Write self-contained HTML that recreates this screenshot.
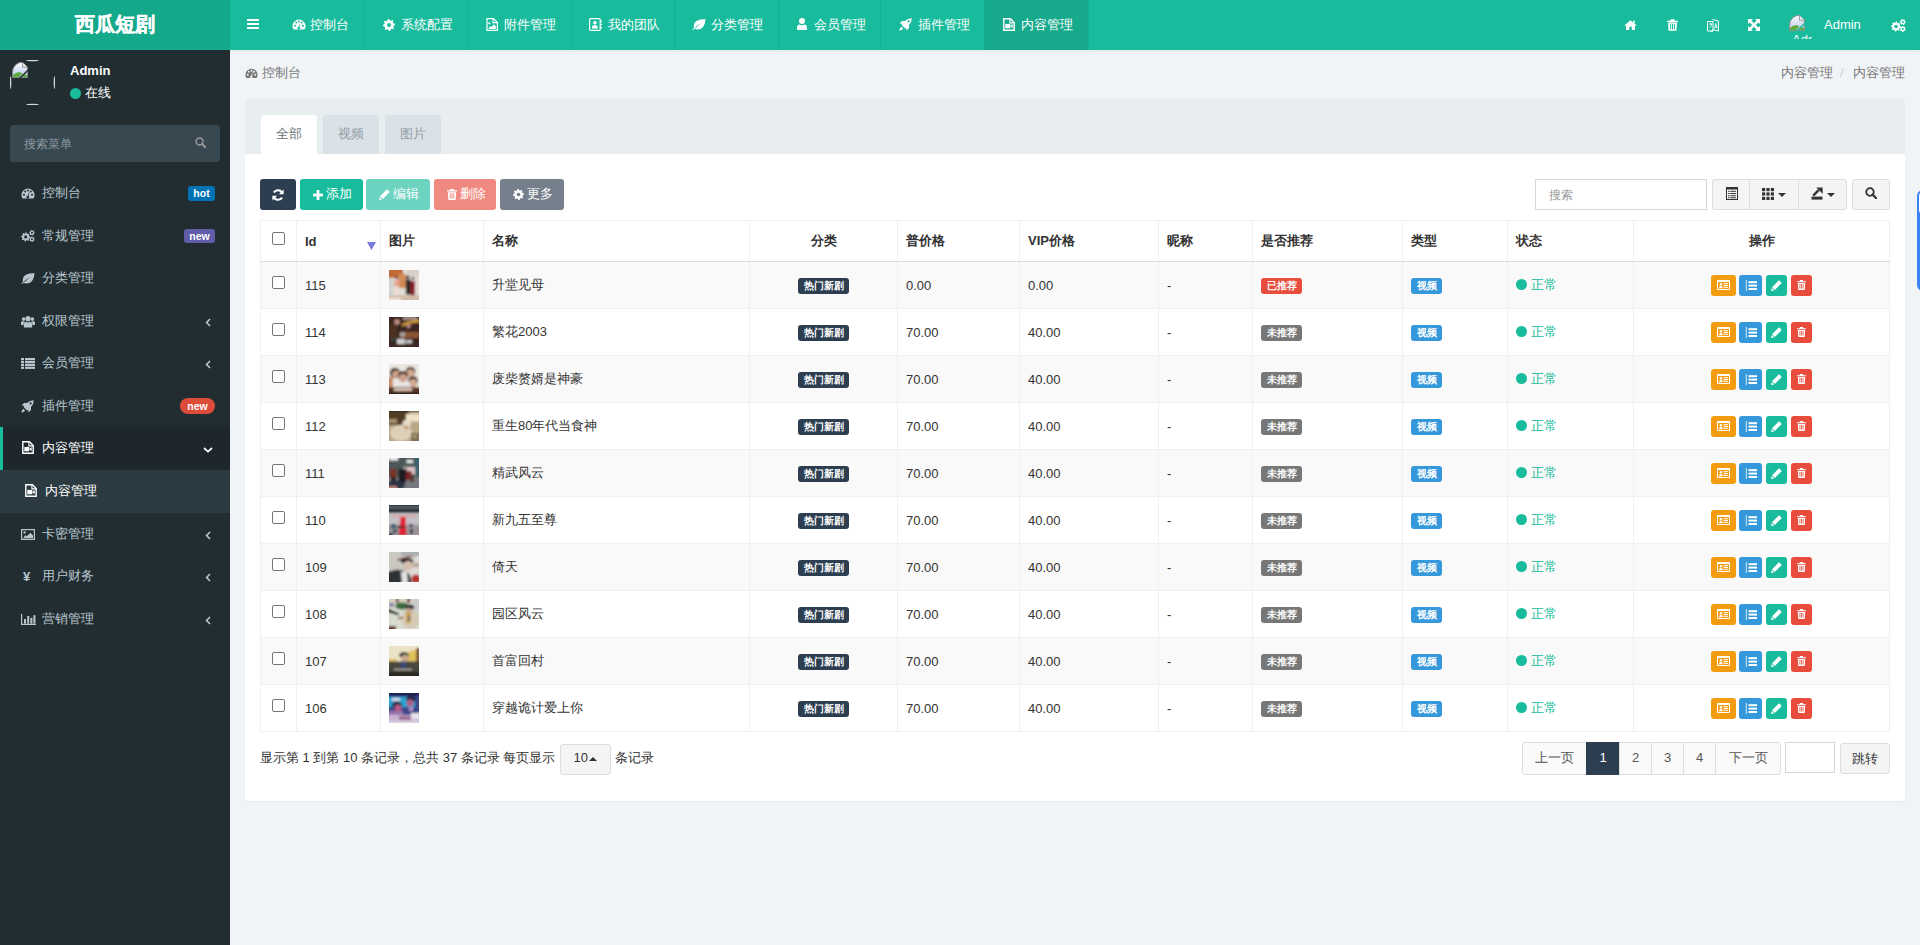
<!DOCTYPE html><html><head><meta charset="utf-8"><title>内容管理</title><style>
*{box-sizing:border-box;margin:0;padding:0}
html,body{width:1920px;height:945px;overflow:hidden}
body{font-family:"Liberation Sans",sans-serif;font-size:13px;color:#333;background:#f1f4f6;position:relative}
.abs{position:absolute}
.hdr{position:absolute;left:0;top:0;width:1920px;height:50px;background:#18bc9c;box-shadow:0 1px 3px rgba(0,0,0,.06);z-index:2}
.logo{z-index:3;position:absolute;left:0;top:0;width:230px;height:50px;background:#15a98b;color:#fff;font-size:20px;font-weight:bold;text-align:center;line-height:48px;-webkit-text-stroke:.35px #fff}
.nv{position:absolute;top:0;height:50px;border-right:1px solid #17ae90;z-index:3}
.nv.act{background:#16a98c}
.t{position:absolute;white-space:nowrap;line-height:20px;z-index:4}
.ic{position:absolute;z-index:4}
.side{position:absolute;left:0;top:50px;width:230px;height:895px;background:#222d32}
.mi{position:absolute;left:0;width:230px;height:43px;color:#b8c7ce}
.mi .t{left:42px;top:11px}
.badge{position:absolute;font-size:10.5px;font-weight:bold;color:#fff;line-height:15px;text-align:center;border-radius:3px}
.content{position:absolute;left:230px;top:50px;width:1690px;height:895px;background:#f1f4f6}
.panel{position:absolute;left:245px;top:99px;width:1660px;height:702px;background:#fff;border-radius:3px;box-shadow:0 1px 1px rgba(0,0,0,.05)}
.phead{position:absolute;left:245px;top:99px;width:1660px;height:55px;background:#e8edf0;border-radius:3px 3px 0 0}
.tab{position:absolute;top:115px;height:39px;width:56px;background:#dae1e7;border-radius:3px 3px 0 0;color:#949ea5;text-align:center;line-height:37px}
.tab.on{background:#fff;color:#6b7378}
.btn{position:absolute;top:179px;height:31px;border-radius:3px;color:#fff;white-space:nowrap}
.tbl{position:absolute;left:260px;top:220px;width:1630px;border-collapse:collapse;table-layout:fixed}
.tbl td,.tbl th{border:1px solid #f0f0f0;padding:0 8px;vertical-align:middle;white-space:nowrap;overflow:hidden}
.tbl th{height:41px;font-weight:bold;text-align:left;border-bottom:1px solid #dddddd;color:#333}
.tbl td{height:47px;color:#333}
.tbl tr.s td{background:#f9f9f9}
.lbl{position:relative;top:1px;display:inline-block;font-size:9.75px;font-weight:bold;color:#fff;border-radius:3px;height:16px;line-height:16px;text-align:center;vertical-align:middle}
.ab{display:inline-block;height:21px;border-radius:3px;vertical-align:middle;position:relative}
.ab svg{position:absolute}
.pg{position:absolute;top:742px;height:33px;border:1px solid #ddd;background:#fafafa;color:#555;text-align:center;line-height:29px;font-size:13px}
</style></head><body>
<svg width="0" height="0" style="position:absolute"><defs><filter id="bl" x="-10%" y="-10%" width="120%" height="120%"><feGaussianBlur stdDeviation="0.9"/></filter></defs></svg>
<div class="hdr"></div>
<div class="logo">西瓜短剧</div>
<div class="ic" style="left:247px;top:19px"><svg width="12" height="10" viewBox="0 0 12 10" style="display:block;"><rect x="0" y="0" width="12" height="2" fill="#fff"/><rect x="0" y="4" width="12" height="2" fill="#fff"/><rect x="0" y="8" width="12" height="2" fill="#fff"/></svg></div>
<div class="nv" style="left:274px;width:90px"></div>
<div class="ic" style="left:291.6px;top:19px"><svg width="14" height="11" viewBox="0 0 14 11" style="display:block;"><path d="M7 0.5A6.5 6.5 0 0 0 0.5 7v0.5q0 1.6 1.1 2.9h10.8q1.1-1.3 1.1-2.9V7A6.5 6.5 0 0 0 7 0.5z" fill="#fff"/><circle cx="3" cy="6.8" r="1" fill="#18bc9c"/><circle cx="4.2" cy="3.6" r="1" fill="#18bc9c"/><circle cx="7" cy="2.5" r="1" fill="#18bc9c"/><circle cx="11" cy="6.8" r="1" fill="#18bc9c"/><circle cx="9.8" cy="3.6" r="1" fill="#18bc9c"/><path d="M8.6 3.2 L7.6 8.2 A1.3 1.3 0 1 1 6.6 7.9z" fill="#18bc9c"/></svg></div>
<div class="t" style="left:310px;top:15px;color:#fff">控制台</div>
<div class="nv" style="left:365px;width:103px"></div>
<div class="ic" style="left:382.7px;top:19px"><svg width="12" height="12" viewBox="0 0 12 12" style="display:block;"><path d="M11.88 4.81 L12.00 5.98 L10.51 6.88 L10.26 7.74 L11.00 9.32 L10.26 10.23 L8.57 9.82 L7.78 10.24 L7.19 11.88 L6.02 12.00 L5.12 10.51 L4.26 10.26 L2.68 11.00 L1.77 10.26 L2.18 8.57 L1.76 7.78 L0.12 7.19 L0.00 6.02 L1.49 5.12 L1.74 4.26 L1.00 2.68 L1.74 1.77 L3.43 2.18 L4.22 1.76 L4.81 0.12 L5.98 0.00 L6.88 1.49 L7.74 1.74 L9.32 1.00 L10.23 1.74 L9.82 3.43 L10.24 4.22z" fill="#fff"/><circle cx="6" cy="6" r="2" fill="#18bc9c"/></svg></div>
<div class="t" style="left:401px;top:15px;color:#fff">系统配置</div>
<div class="nv" style="left:469px;width:103px"></div>
<div class="ic" style="left:486px;top:18px"><svg width="12" height="13" viewBox="0 0 12 13" style="display:block;"><path d="M1 0.6h6.5l3.9 3.9v7.9h-10.4z" fill="none" stroke="#fff" stroke-width="1.2"/><path d="M7 0.6v4h4" fill="none" stroke="#fff" stroke-width="1.1"/><circle cx="3.3" cy="5.3" r="1.1" fill="#fff"/><path d="M2.2 11h7.6V8.3L8 6.3 5.4 9 4.2 8z" fill="#fff"/></svg></div>
<div class="t" style="left:504px;top:15px;color:#fff">附件管理</div>
<div class="nv" style="left:573px;width:102px"></div>
<div class="ic" style="left:589px;top:18px"><svg width="13" height="13" viewBox="0 0 13 13" style="display:block;"><rect x="0.6" y="0.6" width="10.6" height="11.8" rx="1" fill="none" stroke="#fff" stroke-width="1.2"/><circle cx="5.9" cy="4.7" r="1.8" fill="#fff"/><path d="M2.9 10.4q0-3.4 3-3.4t3 3.4z" fill="#fff"/><rect x="11.5" y="2.5" width="1.5" height="1.3" fill="#fff"/><rect x="11.5" y="5.8" width="1.5" height="1.3" fill="#fff"/><rect x="11.5" y="9" width="1.5" height="1.3" fill="#fff"/></svg></div>
<div class="t" style="left:607.5px;top:15px;color:#fff">我的团队</div>
<div class="nv" style="left:676px;width:103px"></div>
<div class="ic" style="left:692px;top:19px"><svg width="14" height="11" viewBox="0 0 14 11" style="display:block;"><path d="M13.5 0.3Q9 0 5.5 1.5Q1.8 3.2 1.8 7.1q0 .9.4 1.7Q0.8 9.8 0.3 10.8l.8.3q.5-.8 1.5-1.6Q3.5 10.5 5.4 10.5q4.2 0 6.3-3.5Q13.3 4.4 13.5 0.3zM3 8.6Q5.5 5.5 9.8 4Q6 6 3.7 9z" fill="#fff"/></svg></div>
<div class="t" style="left:711px;top:15px;color:#fff">分类管理</div>
<div class="nv" style="left:780px;width:101px"></div>
<div class="ic" style="left:797px;top:18px"><svg width="10" height="12" viewBox="0 0 10 12" style="display:block;"><circle cx="5" cy="3" r="3" fill="#fff"/><path d="M0 12v-2.2q0-3 2.6-3.4 1.1.9 2.4.9t2.4-.9q2.6.4 2.6 3.4V12z" fill="#fff"/></svg></div>
<div class="t" style="left:814px;top:15px;color:#fff">会员管理</div>
<div class="nv" style="left:882px;width:103px"></div>
<div class="ic" style="left:899px;top:18px"><svg width="13" height="13" viewBox="0 0 13 13" style="display:block;"><path d="M12.8 0.2Q8.6 0.2 6 3H3L0.5 5.5l2.8.3L2.6 7l3.4 3.4 1.2-.7.3 2.8L10 10V7q2.8-2.6 2.8-6.8zM9.6 2.3a1.1 1.1 0 1 1 0 2.2 1.1 1.1 0 1 1 0-2.2zM2.2 8.8Q.6 10.4.3 12.7 2.6 12.4 4.2 10.8z" fill="#fff"/></svg></div>
<div class="t" style="left:917.5px;top:15px;color:#fff">插件管理</div>
<div class="nv act" style="left:985px;width:104px"></div>
<div class="ic" style="left:1002.6px;top:18px"><svg width="12" height="13" viewBox="0 0 12 13" style="display:block;"><path d="M0.8 0.7h6.6l3.8 3.8v7.8h-10.4z" fill="none" stroke="#fff" stroke-width="1.4"/><path d="M6.9 0.7v4.2h4.3" fill="none" stroke="#fff" stroke-width="1.1"/><rect x="2.3" y="5.9" width="5" height="4.4" fill="#fff"/><path d="M7.1 8.1l2.6-2.1v4.2z" fill="#fff"/></svg></div>
<div class="t" style="left:1021px;top:15px;color:#fff">内容管理</div>
<div class="ic" style="left:1624px;top:20px"><svg width="13" height="10" viewBox="0 0 13 10" style="display:block;"><path d="M6.5 1.2L2 5v5h3.2V6.8h2.6V10H11V5z" fill="#fff"/><path d="M0.5 5.3L6.5 0.3l6 5-.6.7L6.5 1.5 1.1 6z" fill="#fff"/><rect x="9.3" y="0.6" width="1.6" height="2.6" fill="#fff"/></svg></div>
<div class="ic" style="left:1666.5px;top:19px"><svg width="11" height="12" viewBox="0 0 11 12" style="display:block;"><path d="M3.8 0.3h3.4l.7 1.5H11v1.3H0V1.8h3.1z" fill="#fff"/><path d="M1 3.6h9l-.6 8.1H1.6z" fill="#fff"/><rect x="3.1" y="4.8" width="1" height="5.6" fill="#18bc9c"/><rect x="5" y="4.8" width="1" height="5.6" fill="#18bc9c"/><rect x="6.9" y="4.8" width="1" height="5.6" fill="#18bc9c"/></svg></div>
<div class="ic" style="left:1707px;top:19px"><svg width="12" height="13" viewBox="0 0 12 13" style="display:block;"><path d="M0.5 2.5h5.5v9.5H0.5z" fill="none" stroke="#fff" stroke-width="1"/><path d="M5.5 0.5l6 1.5v10l-6-1.5" fill="none" stroke="#fff" stroke-width="1"/><path d="M2 5h3M3.5 4v1.3M2.4 9q2-1.5 2.3-4" stroke="#fff" stroke-width=".8" fill="none"/><path d="M7.5 9.5l1.3-5 1.3 5M8 8h1.6" stroke="#fff" stroke-width=".9" fill="none"/><path d="M3 12q1.5 1 3 .2" stroke="#fff" stroke-width=".8" fill="none"/></svg></div>
<div class="ic" style="left:1748px;top:19px"><svg width="12" height="12" viewBox="0 0 12 12" style="display:block;"><path d="M0 0h5L3.4 1.6 6 4.2 8.6 1.6 7 0h5v5L10.4 3.4 7.8 6l2.6 2.6L12 7v5H7l1.6-1.6L6 7.8 3.4 10.4 5 12H0V7l1.6 1.6L4.2 6 1.6 3.4 0 5z" fill="#fff"/></svg></div>
<div class="ic" style="left:1789px;top:15px"><svg width="16" height="16" viewBox="0 0 16 16" style="display:block;"><defs><linearGradient id="bg1" x1="0" y1="0" x2="0" y2="1"><stop offset="0" stop-color="#fafbfe"/><stop offset="1" stop-color="#b8c6ea"/></linearGradient></defs><path d="M0.6 15.4V10Q0.6 3.5 7.6 0.6h3l4.8 4.6v10.2z" fill="url(#bg1)" stroke="#8c8c8c" stroke-width="1"/><path d="M10.6 0.6v4.6h4.8" fill="#f4f4f4" stroke="#8c8c8c" stroke-width=".9"/><path d="M1.1 15V13Q5 8.6 10.5 11.2L7 15z" fill="#5bab3c"/><path d="M11.5 12.2Q13.5 12 15 13.6V15H9.5z" fill="#5bab3c"/><path d="M7.6 16.2 16.2 8" stroke="#18bc9c" stroke-width="1.5"/></svg></div>
<div class="abs" style="left:1792px;top:34px;width:20px;height:5px;overflow:hidden;z-index:4"><div style="position:absolute;left:0;top:-2.5px;color:#fff;font-size:13px;line-height:15px;white-space:nowrap">Adm</div></div>
<div class="t" style="left:1824px;top:15px;color:#fff">Admin</div>
<div class="ic" style="left:1891px;top:19px"><svg width="15" height="13" viewBox="0 0 15 13" style="display:block;"><path d="M10.00 7.50 L9.90 8.48 L8.51 8.95 L8.16 9.61 L8.54 11.04 L7.78 11.66 L6.45 11.01 L5.74 11.23 L5.00 12.50 L4.02 12.40 L3.55 11.01 L2.89 10.66 L1.46 11.04 L0.84 10.28 L1.49 8.95 L1.27 8.24 L0.00 7.50 L0.10 6.52 L1.49 6.05 L1.84 5.39 L1.46 3.96 L2.22 3.34 L3.55 3.99 L4.26 3.77 L5.00 2.50 L5.98 2.60 L6.45 3.99 L7.11 4.34 L8.54 3.96 L9.16 4.72 L8.51 6.05 L8.73 6.76z" fill="#fff"/><circle cx="5" cy="7.5" r="1.7" fill="#18bc9c"/><path d="M14.80 3.00 L14.70 3.78 L13.79 4.15 L13.43 4.63 L13.30 5.60 L12.58 5.90 L11.80 5.30 L11.20 5.22 L10.30 5.60 L9.68 5.12 L9.81 4.15 L9.58 3.60 L8.80 3.00 L8.90 2.22 L9.81 1.85 L10.17 1.37 L10.30 0.40 L11.02 0.10 L11.80 0.70 L12.40 0.78 L13.30 0.40 L13.92 0.88 L13.79 1.85 L14.02 2.40z" fill="#fff"/><circle cx="11.8" cy="3" r="1.1" fill="#18bc9c"/><path d="M14.67 10.89 L14.34 11.60 L13.36 11.69 L12.87 12.03 L12.47 12.93 L11.69 13.00 L11.12 12.20 L10.57 11.95 L9.60 12.04 L9.15 11.40 L9.56 10.51 L9.50 9.91 L8.93 9.11 L9.26 8.40 L10.24 8.31 L10.73 7.97 L11.13 7.07 L11.91 7.00 L12.48 7.80 L13.03 8.05 L14.00 7.96 L14.45 8.60 L14.04 9.49 L14.10 10.09z" fill="#fff"/><circle cx="11.8" cy="10" r="1.1" fill="#18bc9c"/></svg></div>
<div class="side"></div>
<div class="abs" style="left:10px;top:60px;width:45px;height:45px;border-radius:50%;border:1px dashed rgba(255,255,255,.0)"></div>
<div class="ic" style="left:12px;top:62px"><svg width="16" height="16" viewBox="0 0 16 16" style="display:block;"><defs><linearGradient id="bg2" x1="0" y1="0" x2="0" y2="1"><stop offset="0" stop-color="#fafbfe"/><stop offset="1" stop-color="#b8c6ea"/></linearGradient></defs><path d="M0.6 15.4V10Q0.6 3.5 7.6 0.6h3l4.8 4.6v10.2z" fill="url(#bg2)" stroke="#8c8c8c" stroke-width="1"/><path d="M10.6 0.6v4.6h4.8" fill="#f4f4f4" stroke="#8c8c8c" stroke-width=".9"/><path d="M1.1 15V13Q5 8.6 10.5 11.2L7 15z" fill="#5bab3c"/><path d="M11.5 12.2Q13.5 12 15 13.6V15H9.5z" fill="#5bab3c"/><path d="M7.6 16.2 16.2 8" stroke="#222d32" stroke-width="1.5"/></svg></div>
<svg class="abs" style="left:10px;top:60px" width="45" height="45" viewBox="0 0 45 45"><g fill="#d4d8da"><ellipse cx="22.5" cy="0.6" rx="6.5" ry="0.7"/><ellipse cx="22.5" cy="44.4" rx="6.5" ry="0.7"/><ellipse cx="0.6" cy="22.5" rx="0.7" ry="6.5"/><ellipse cx="44.4" cy="22.5" rx="0.7" ry="6.5"/></g></svg>
<div class="t" style="left:70px;top:61px;color:#fff;font-weight:bold">Admin</div>
<div class="ic" style="left:70px;top:88px"><svg width="11" height="11" viewBox="0 0 11 11" style="display:block;"><circle cx="5.5" cy="5.5" r="5.5" fill="#18bc9c"/></svg></div>
<div class="t" style="left:85px;top:83px;color:#fff">在线</div>
<div class="abs" style="left:10px;top:125px;width:210px;height:37px;background:#374850;border-radius:3px"></div>
<div class="t" style="left:24px;top:134px;color:#8f9aa0;font-size:12px">搜索菜单</div>
<div class="ic" style="left:195px;top:137px"><svg width="11" height="11" viewBox="0 0 12 12" style="display:block;"><circle cx="5" cy="5" r="3.8" fill="none" stroke="#999" stroke-width="1.6"/><path d="M7.6 7.6l3.6 3.6" stroke="#999" stroke-width="2.0" stroke-linecap="round"/></svg></div>
<div class="mi" style="top:171.80px;height:43.07px;"></div>
<div class="ic" style="left:21px;top:188.09px"><svg width="14" height="11" viewBox="0 0 14 11" style="display:block;"><path d="M7 0.5A6.5 6.5 0 0 0 0.5 7v0.5q0 1.6 1.1 2.9h10.8q1.1-1.3 1.1-2.9V7A6.5 6.5 0 0 0 7 0.5z" fill="#b8c7ce"/><circle cx="3" cy="6.8" r="1" fill="#222d32"/><circle cx="4.2" cy="3.6" r="1" fill="#222d32"/><circle cx="7" cy="2.5" r="1" fill="#222d32"/><circle cx="11" cy="6.8" r="1" fill="#222d32"/><circle cx="9.8" cy="3.6" r="1" fill="#222d32"/><path d="M8.6 3.2 L7.6 8.2 A1.3 1.3 0 1 1 6.6 7.9z" fill="#222d32"/></svg></div>
<div class="t" style="left:42px;top:183.09px;color:#b8c7ce">控制台</div>
<div class="badge" style="left:188px;top:185.59px;width:27px;background:#0073b7">hot</div>
<div class="mi" style="top:214.37px;height:43.07px;"></div>
<div class="ic" style="left:21px;top:230.16px"><svg width="14" height="12" viewBox="0 0 15 13" style="display:block;"><path d="M10.00 7.50 L9.90 8.48 L8.51 8.95 L8.16 9.61 L8.54 11.04 L7.78 11.66 L6.45 11.01 L5.74 11.23 L5.00 12.50 L4.02 12.40 L3.55 11.01 L2.89 10.66 L1.46 11.04 L0.84 10.28 L1.49 8.95 L1.27 8.24 L0.00 7.50 L0.10 6.52 L1.49 6.05 L1.84 5.39 L1.46 3.96 L2.22 3.34 L3.55 3.99 L4.26 3.77 L5.00 2.50 L5.98 2.60 L6.45 3.99 L7.11 4.34 L8.54 3.96 L9.16 4.72 L8.51 6.05 L8.73 6.76z" fill="#b8c7ce"/><circle cx="5" cy="7.5" r="1.7" fill="#222d32"/><path d="M14.80 3.00 L14.70 3.78 L13.79 4.15 L13.43 4.63 L13.30 5.60 L12.58 5.90 L11.80 5.30 L11.20 5.22 L10.30 5.60 L9.68 5.12 L9.81 4.15 L9.58 3.60 L8.80 3.00 L8.90 2.22 L9.81 1.85 L10.17 1.37 L10.30 0.40 L11.02 0.10 L11.80 0.70 L12.40 0.78 L13.30 0.40 L13.92 0.88 L13.79 1.85 L14.02 2.40z" fill="#b8c7ce"/><circle cx="11.8" cy="3" r="1.1" fill="#222d32"/><path d="M14.67 10.89 L14.34 11.60 L13.36 11.69 L12.87 12.03 L12.47 12.93 L11.69 13.00 L11.12 12.20 L10.57 11.95 L9.60 12.04 L9.15 11.40 L9.56 10.51 L9.50 9.91 L8.93 9.11 L9.26 8.40 L10.24 8.31 L10.73 7.97 L11.13 7.07 L11.91 7.00 L12.48 7.80 L13.03 8.05 L14.00 7.96 L14.45 8.60 L14.04 9.49 L14.10 10.09z" fill="#b8c7ce"/><circle cx="11.8" cy="10" r="1.1" fill="#222d32"/></svg></div>
<div class="t" style="left:42px;top:225.66px;color:#b8c7ce">常规管理</div>
<div class="badge" style="left:184px;top:228.66px;width:31px;height:14px;line-height:14px;background:#605ca8">new</div>
<div class="mi" style="top:256.94px;height:43.07px;"></div>
<div class="ic" style="left:21px;top:273.23px"><svg width="14" height="11" viewBox="0 0 14 11" style="display:block;"><path d="M13.5 0.3Q9 0 5.5 1.5Q1.8 3.2 1.8 7.1q0 .9.4 1.7Q0.8 9.8 0.3 10.8l.8.3q.5-.8 1.5-1.6Q3.5 10.5 5.4 10.5q4.2 0 6.3-3.5Q13.3 4.4 13.5 0.3zM3 8.6Q5.5 5.5 9.8 4Q6 6 3.7 9z" fill="#b8c7ce"/></svg></div>
<div class="t" style="left:42px;top:268.23px;color:#b8c7ce">分类管理</div>
<div class="mi" style="top:299.51px;height:43.07px;"></div>
<div class="ic" style="left:21px;top:314.80px"><svg width="14" height="13" viewBox="0 0 14 12" style="display:block;"><circle cx="7" cy="3.2" r="2.6" fill="#b8c7ce"/><path d="M2.8 12V9.2q0-2.8 2.2-3 .9.8 2 .8t2-.8q2.2.2 2.2 3V12z" fill="#b8c7ce"/><circle cx="2.6" cy="3.6" r="1.8" fill="#b8c7ce"/><circle cx="11.4" cy="3.6" r="1.8" fill="#b8c7ce"/><path d="M0 9.5V7.6q0-1.8 1.6-2 .6.5 1.3.5.8 0 1.3-.3-1.6.9-1.8 3.7z" fill="#b8c7ce"/><path d="M14 9.5V7.6q0-1.8-1.6-2-.6.5-1.3.5-.8 0-1.3-.3 1.6.9 1.8 3.7z" fill="#b8c7ce"/></svg></div>
<div class="t" style="left:42px;top:310.80px;color:#b8c7ce">权限管理</div>
<div class="ic" style="left:205px;top:317.80px"><svg width="6" height="9" viewBox="0 0 6 9" style="display:block;"><path d="M5 1L1.6 4.5 5 8" fill="none" stroke="#b8c7ce" stroke-width="1.6"/></svg></div>
<div class="mi" style="top:342.08px;height:43.07px;"></div>
<div class="ic" style="left:21px;top:358.37px"><svg width="14" height="11" viewBox="0 0 14 11" style="display:block;"><rect x="0" y="0" width="3" height="2.2" fill="#b8c7ce"/><rect x="4" y="0" width="10" height="2.2" fill="#b8c7ce"/><rect x="0" y="2.9" width="3" height="2.2" fill="#b8c7ce"/><rect x="4" y="2.9" width="10" height="2.2" fill="#b8c7ce"/><rect x="0" y="5.8" width="3" height="2.2" fill="#b8c7ce"/><rect x="4" y="5.8" width="10" height="2.2" fill="#b8c7ce"/><rect x="0" y="8.7" width="3" height="2.2" fill="#b8c7ce"/><rect x="4" y="8.7" width="10" height="2.2" fill="#b8c7ce"/></svg></div>
<div class="t" style="left:42px;top:353.37px;color:#b8c7ce">会员管理</div>
<div class="ic" style="left:205px;top:360.37px"><svg width="6" height="9" viewBox="0 0 6 9" style="display:block;"><path d="M5 1L1.6 4.5 5 8" fill="none" stroke="#b8c7ce" stroke-width="1.6"/></svg></div>
<div class="mi" style="top:384.65px;height:43.07px;"></div>
<div class="ic" style="left:21px;top:399.94px"><svg width="13" height="13" viewBox="0 0 13 13" style="display:block;"><path d="M12.8 0.2Q8.6 0.2 6 3H3L0.5 5.5l2.8.3L2.6 7l3.4 3.4 1.2-.7.3 2.8L10 10V7q2.8-2.6 2.8-6.8zM9.6 2.3a1.1 1.1 0 1 1 0 2.2 1.1 1.1 0 1 1 0-2.2zM2.2 8.8Q.6 10.4.3 12.7 2.6 12.4 4.2 10.8z" fill="#b8c7ce"/></svg></div>
<div class="t" style="left:42px;top:395.94px;color:#b8c7ce">插件管理</div>
<div class="badge" style="left:180px;top:397.94px;width:35px;height:16px;line-height:16px;background:#dd4b39;border-radius:8px">new</div>
<div class="mi" style="top:427.22px;height:43.07px;background:#1e282c;border-left:3px solid #18bc9c;"></div>
<div class="ic" style="left:22px;top:440.51px"><svg width="12" height="13" viewBox="0 0 12 13" style="display:block;"><path d="M0.8 0.7h6.6l3.8 3.8v7.8h-10.4z" fill="none" stroke="#fff" stroke-width="1.4"/><path d="M6.9 0.7v4.2h4.3" fill="none" stroke="#fff" stroke-width="1.1"/><rect x="2.3" y="5.9" width="5" height="4.4" fill="#fff"/><path d="M7.1 8.1l2.6-2.1v4.2z" fill="#fff"/></svg></div>
<div class="t" style="left:42px;top:437.51px;color:#fff">内容管理</div>
<div class="ic" style="left:203px;top:446.51px"><svg width="10" height="6" viewBox="0 0 10 6" style="display:block;"><path d="M1 1l4 3.6L9 1" fill="none" stroke="#fff" stroke-width="1.7"/></svg></div>
<div class="mi" style="top:469.79px;height:43.07px;background:#2c3b41;"></div>
<div class="ic" style="left:25px;top:484.08px"><svg width="12" height="13" viewBox="0 0 12 13" style="display:block;"><path d="M0.8 0.7h6.6l3.8 3.8v7.8h-10.4z" fill="none" stroke="#fff" stroke-width="1.4"/><path d="M6.9 0.7v4.2h4.3" fill="none" stroke="#fff" stroke-width="1.1"/><rect x="2.3" y="5.9" width="5" height="4.4" fill="#fff"/><path d="M7.1 8.1l2.6-2.1v4.2z" fill="#fff"/></svg></div>
<div class="t" style="left:45px;top:481.08px;color:#fff">内容管理</div>
<div class="mi" style="top:512.36px;height:43.07px;"></div>
<div class="ic" style="left:21px;top:528.64px"><svg width="14" height="11" viewBox="0 0 14 11" style="display:block;"><rect x="0.6" y="0.6" width="12.8" height="9.8" fill="none" stroke="#b8c7ce" stroke-width="1.2"/><circle cx="3.6" cy="3.4" r="1.2" fill="#b8c7ce"/><path d="M2 9.2h10V6.5L9.3 3.8 5.8 7.3 4.4 6z" fill="#b8c7ce"/></svg></div>
<div class="t" style="left:42px;top:523.64px;color:#b8c7ce">卡密管理</div>
<div class="ic" style="left:205px;top:530.64px"><svg width="6" height="9" viewBox="0 0 6 9" style="display:block;"><path d="M5 1L1.6 4.5 5 8" fill="none" stroke="#b8c7ce" stroke-width="1.6"/></svg></div>
<div class="mi" style="top:554.93px;height:43.07px;"></div>
<div class="ic" style="left:23px;top:570.22px"><div style="font-size:13px;font-weight:bold;color:#b8c7ce;line-height:14px">¥</div></div>
<div class="t" style="left:42px;top:566.22px;color:#b8c7ce">用户财务</div>
<div class="ic" style="left:205px;top:573.22px"><svg width="6" height="9" viewBox="0 0 6 9" style="display:block;"><path d="M5 1L1.6 4.5 5 8" fill="none" stroke="#b8c7ce" stroke-width="1.6"/></svg></div>
<div class="mi" style="top:597.50px;height:43.07px;"></div>
<div class="ic" style="left:21px;top:613.78px"><svg width="15" height="11" viewBox="0 0 15 11" style="display:block;"><path d="M0.6 0v10.4H15" fill="none" stroke="#b8c7ce" stroke-width="1.2"/><rect x="3" y="5" width="2" height="4.6" fill="#b8c7ce"/><rect x="6.2" y="2" width="2" height="7.6" fill="#b8c7ce"/><rect x="9.4" y="3.8" width="2" height="5.8" fill="#b8c7ce"/><rect x="12.4" y="1.2" width="2" height="8.4" fill="#b8c7ce"/></svg></div>
<div class="t" style="left:42px;top:608.78px;color:#b8c7ce">营销管理</div>
<div class="ic" style="left:205px;top:615.78px"><svg width="6" height="9" viewBox="0 0 6 9" style="display:block;"><path d="M5 1L1.6 4.5 5 8" fill="none" stroke="#b8c7ce" stroke-width="1.6"/></svg></div>
<div class="ic" style="left:245px;top:68px"><svg width="13" height="11" viewBox="0 0 14 11" style="display:block;"><path d="M7 0.5A6.5 6.5 0 0 0 0.5 7v0.5q0 1.6 1.1 2.9h10.8q1.1-1.3 1.1-2.9V7A6.5 6.5 0 0 0 7 0.5z" fill="#777"/><circle cx="3" cy="6.8" r="1" fill="#f1f4f6"/><circle cx="4.2" cy="3.6" r="1" fill="#f1f4f6"/><circle cx="7" cy="2.5" r="1" fill="#f1f4f6"/><circle cx="11" cy="6.8" r="1" fill="#f1f4f6"/><circle cx="9.8" cy="3.6" r="1" fill="#f1f4f6"/><path d="M8.6 3.2 L7.6 8.2 A1.3 1.3 0 1 1 6.6 7.9z" fill="#f1f4f6"/></svg></div>
<div class="t" style="left:261.5px;top:63px;color:#777">控制台</div>
<div class="t" style="left:1780.5px;top:63px;color:#777">内容管理</div>
<div class="t" style="left:1840px;top:63px;color:#ccc">/</div>
<div class="t" style="left:1853px;top:63px;color:#777">内容管理</div>
<div class="panel"></div>
<div class="phead"></div>
<div class="tab on" style="left:261px">全部</div>
<div class="tab" style="left:323px">视频</div>
<div class="tab" style="left:385px">图片</div>
<div class="btn" style="left:260px;width:36px;background:#2c3e50"><div class="ic" style="left:12px;top:9.5px"><svg width="12" height="12" viewBox="0 0 12 12" style="display:block;"><path d="M10.2 4.2A4.6 4.6 0 0 0 1.9 3.4" fill="none" stroke="#fff" stroke-width="2"/><path d="M11.6 0.4v4.8H6.8z" fill="#fff"/><path d="M1.8 7.8a4.6 4.6 0 0 0 8.3.8" fill="none" stroke="#fff" stroke-width="2"/><path d="M0.4 11.6V6.8h4.8z" fill="#fff"/></svg></div></div>
<div class="btn" style="left:300px;width:63px;background:#18bc9c"><div class="ic" style="left:13px;top:10.5px"><svg width="10" height="10" viewBox="0 0 10 10" style="display:block;"><rect x="3.6" y="0" width="2.8" height="10" fill="#fff"/><rect x="0" y="3.6" width="10" height="2.8" fill="#fff"/></svg></div><div class="t" style="left:26px;top:4.5px">添加</div></div>
<div class="btn" style="left:366px;width:64px;background:#6bd3bf"><div class="ic" style="left:13px;top:10px"><svg width="11" height="11" viewBox="0 0 11 11" style="display:block;"><path d="M8 0.2l2.8 2.8-7 7-2.8-2.8zM0.6 7.9l2.5 2.5-3 .6z" fill="#fff"/></svg></div><div class="t" style="left:27px;top:4.5px">编辑</div></div>
<div class="btn" style="left:434px;width:62px;background:#f08a80"><div class="ic" style="left:12.5px;top:10px"><svg width="10" height="11" viewBox="0 0 10 11" style="display:block;"><path d="M3.4 0h3.2l.6 1.3H10v1.2H0V1.3h2.8z" fill="#fff"/><path d="M0.9 3.2h8.2l-.5 7.8H1.4z" fill="#fff"/><rect x="2.8" y="4.3" width=".9" height="5.2" fill="#f08a80"/><rect x="4.55" y="4.3" width=".9" height="5.2" fill="#f08a80"/><rect x="6.3" y="4.3" width=".9" height="5.2" fill="#f08a80"/></svg></div><div class="t" style="left:25.5px;top:4.5px">删除</div></div>
<div class="btn" style="left:500px;width:64px;background:#76808c"><div class="ic" style="left:12.5px;top:9.5px"><svg width="11" height="11" viewBox="0 0 12 12" style="display:block;"><path d="M11.88 4.81 L12.00 5.98 L10.51 6.88 L10.26 7.74 L11.00 9.32 L10.26 10.23 L8.57 9.82 L7.78 10.24 L7.19 11.88 L6.02 12.00 L5.12 10.51 L4.26 10.26 L2.68 11.00 L1.77 10.26 L2.18 8.57 L1.76 7.78 L0.12 7.19 L0.00 6.02 L1.49 5.12 L1.74 4.26 L1.00 2.68 L1.74 1.77 L3.43 2.18 L4.22 1.76 L4.81 0.12 L5.98 0.00 L6.88 1.49 L7.74 1.74 L9.32 1.00 L10.23 1.74 L9.82 3.43 L10.24 4.22z" fill="#fff"/><circle cx="6" cy="6" r="2" fill="#76808c"/></svg></div><div class="t" style="left:26.5px;top:4.5px">更多</div></div>
<div class="abs" style="left:1535px;top:179px;width:172px;height:31px;border:1px solid #d2d6de;background:#fff"></div>
<div class="t" style="left:1548.5px;top:185px;color:#999;font-size:12px">搜索</div>
<div class="abs" style="left:1712px;top:179px;width:135px;height:31px;border:1px solid #ddd;background:#f4f4f4;border-radius:3px"></div>
<div class="abs" style="left:1749px;top:179px;width:1px;height:31px;background:#ddd"></div>
<div class="abs" style="left:1798px;top:179px;width:1px;height:31px;background:#ddd"></div>
<div class="ic" style="left:1726px;top:186.5px"><svg width="12" height="13" viewBox="0 0 12 13" style="display:block;"><rect x="0.5" y="0.5" width="11" height="12" fill="none" stroke="#333" stroke-width="1"/><rect x="0.5" y="0.5" width="11" height="2" fill="#333"/><rect x="2" y="3.8" width="1.5" height="1" fill="#333"/><rect x="4.3" y="3.8" width="5.6" height="1" fill="#333"/><rect x="2" y="6" width="1.5" height="1" fill="#333"/><rect x="4.3" y="6" width="5.6" height="1" fill="#333"/><rect x="2" y="8.2" width="1.5" height="1" fill="#333"/><rect x="4.3" y="8.2" width="5.6" height="1" fill="#333"/><rect x="2" y="10.2" width="1.5" height="1" fill="#333"/><rect x="4.3" y="10.2" width="5.6" height="1" fill="#333"/></svg></div>
<div class="ic" style="left:1762px;top:187.5px"><svg width="12" height="12" viewBox="0 0 12 12" style="display:block;"><rect x="0" y="0" width="3.2" height="3.2" fill="#333"/><rect x="0" y="4.4" width="3.2" height="3.2" fill="#333"/><rect x="0" y="8.8" width="3.2" height="3.2" fill="#333"/><rect x="4.4" y="0" width="3.2" height="3.2" fill="#333"/><rect x="4.4" y="4.4" width="3.2" height="3.2" fill="#333"/><rect x="4.4" y="8.8" width="3.2" height="3.2" fill="#333"/><rect x="8.8" y="0" width="3.2" height="3.2" fill="#333"/><rect x="8.8" y="4.4" width="3.2" height="3.2" fill="#333"/><rect x="8.8" y="8.8" width="3.2" height="3.2" fill="#333"/></svg></div>
<div class="ic" style="left:1778px;top:192.5px"><svg width="8" height="4" viewBox="0 0 8 4" style="display:block;"><path d="M0 0h8L4 4z" fill="#333"/></svg></div>
<div class="ic" style="left:1810.5px;top:186.5px"><svg width="13" height="13" viewBox="0 0 13 13" style="display:block;"><rect x="0.5" y="9.6" width="11" height="3" fill="#333"/><path d="M2.2 8.6L7.6 3.2" stroke="#333" stroke-width="2.4"/><path d="M5.2 0.4h6.4v6.4z" fill="#333"/></svg></div>
<div class="ic" style="left:1826.5px;top:192.5px"><svg width="8" height="4" viewBox="0 0 8 4" style="display:block;"><path d="M0 0h8L4 4z" fill="#333"/></svg></div>
<div class="abs" style="left:1852px;top:179px;width:38px;height:31px;border:1px solid #ddd;background:#f4f4f4;border-radius:3px"></div>
<div class="ic" style="left:1865px;top:187px"><svg width="12" height="12" viewBox="0 0 12 12" style="display:block;"><circle cx="5" cy="5" r="3.8" fill="none" stroke="#333" stroke-width="1.8"/><path d="M7.6 7.6l3.6 3.6" stroke="#333" stroke-width="2.2" stroke-linecap="round"/></svg></div>
<table class="tbl"><colgroup><col style="width:36px"><col style="width:84px"><col style="width:103px"><col style="width:266px"><col style="width:148px"><col style="width:122px"><col style="width:139px"><col style="width:94px"><col style="width:150px"><col style="width:105px"><col style="width:126px"><col style="width:256px"></colgroup><tr><th style="text-align:center;padding:0"><span style="display:inline-block;width:13px;height:13px;border:1px solid #767676;border-radius:2px;background:#fff;vertical-align:middle;position:relative;top:-4px"></span></th><th style="position:relative">Id<span style="position:absolute;left:70px;top:20.5px"><svg width="9" height="8" viewBox="0 0 9 8" style="display:block;"><path d="M0 0h9L4.5 8z" fill="#7b7bdc"/></svg></span></th><th>图片</th><th>名称</th><th style="text-align:center">分类</th><th>普价格</th><th>VIP价格</th><th>昵称</th><th>是否推荐</th><th>类型</th><th>状态</th><th style="text-align:center">操作</th></tr><tr class="s"><td style="text-align:center;padding:0"><span style="display:inline-block;width:13px;height:13px;border:1px solid #767676;border-radius:2px;background:#fff;vertical-align:middle;position:relative;top:-4px"></span></td><td>115</td><td><span style="display:inline-block;width:30px;height:30px;vertical-align:middle;overflow:hidden"><svg width="30" height="30" viewBox="0 0 30 30" style="display:block"><g filter="url(#bl)"><rect x="-2" y="-2" width="34" height="34" fill="#e2dcd6"/><rect x="-2" y="-2" width="16" height="10" fill="#c06a35"/><rect x="9" y="4" width="8" height="14" fill="#d38a55"/><rect x="-2" y="9" width="6" height="17" fill="#cfd3cf"/><rect x="18" y="-2" width="14" height="8" fill="#d8cfc6"/><circle cx="7.5" cy="7.5" r="1.6" fill="#6a4538"/><rect x="5" y="10" width="5.5" height="6.5" fill="#e6a08a"/><rect x="5.5" y="16" width="4" height="10" fill="#eadbd0"/><circle cx="18.8" cy="7.3" r="1.7" fill="#2e2a2a"/><rect x="16.8" y="9.5" width="5" height="15" fill="#2a2828"/><circle cx="24" cy="8.5" r="1.4" fill="#3a2a2a"/><rect x="21.5" y="11" width="4.5" height="14.5" fill="#8a1a28"/><rect x="-2" y="25.5" width="34" height="6" fill="#d2bba6"/><rect x="-2" y="28" width="14" height="4" fill="#ece6e0"/></g></svg></span></td><td>升堂见母</td><td style="text-align:center"><span class="lbl" style="width:51px;background:#2c3e50">热门新剧</span></td><td>0.00</td><td>0.00</td><td>-</td><td><span class="lbl" style="width:41px;background:#e74c3c">已推荐</span></td><td><span class="lbl" style="width:31px;background:#3498db">视频</span></td><td style="color:#18bc9c"><span style="display:inline-block;width:11px;height:11px;border-radius:50%;background:#18bc9c;vertical-align:middle;margin-right:4px;position:relative;top:-1px"></span>正常</td><td style="text-align:center;padding:0;font-size:0"><span class="ab" style="width:25px;background:#f39c12"><span style="position:absolute;left:6px;top:5.5px"><svg width="13" height="10" viewBox="0 0 13 10" style="display:block;"><rect x="0" y="0" width="13" height="10" rx=".8" fill="#fff"/><rect x="1" y="2" width="11" height="7" fill="#f39c12"/><circle cx="3.9" cy="4.3" r="1.2" fill="#fff"/><path d="M2 8.2q0-2.5 1.9-2.5t1.9 2.5z" fill="#fff"/><rect x="6.5" y="3.2" width="4.5" height="1" fill="#fff"/><rect x="6.5" y="5" width="4.5" height="1" fill="#fff"/><rect x="6.5" y="6.8" width="4.5" height="1" fill="#fff"/></svg></span></span><span class="ab" style="width:23px;background:#3498db;margin-left:3.5px"><span style="position:absolute;left:6px;top:5px"><svg width="12" height="11" viewBox="0 0 12 11" style="display:block;"><rect x="0.8" y="0" width="1" height="11" fill="#fff" opacity=".8"/><rect x="3.5" y="1.2" width="8.5" height="2" fill="#fff"/><rect x="3.5" y="4.6" width="8.5" height="2" fill="#fff"/><rect x="3.5" y="8" width="8.5" height="2" fill="#fff"/></svg></span></span><span class="ab" style="width:21px;background:#18bc9c;margin-left:4px"><span style="position:absolute;left:5px;top:5px"><svg width="11" height="11" viewBox="0 0 11 11" style="display:block;"><path d="M8 0.2l2.8 2.8-7 7-2.8-2.8zM0.6 7.9l2.5 2.5-3 .6z" fill="#fff"/></svg></span></span><span class="ab" style="width:21px;background:#e74c3c;margin-left:4px"><span style="position:absolute;left:6px;top:5.5px"><svg width="9" height="10" viewBox="0 0 10 11" style="display:block;"><path d="M3.4 0h3.2l.6 1.3H10v1.2H0V1.3h2.8z" fill="#fff"/><path d="M0.9 3.2h8.2l-.5 7.8H1.4z" fill="#fff"/><rect x="2.8" y="4.3" width=".9" height="5.2" fill="#e74c3c"/><rect x="4.55" y="4.3" width=".9" height="5.2" fill="#e74c3c"/><rect x="6.3" y="4.3" width=".9" height="5.2" fill="#e74c3c"/></svg></span></span></td></tr><tr><td style="text-align:center;padding:0"><span style="display:inline-block;width:13px;height:13px;border:1px solid #767676;border-radius:2px;background:#fff;vertical-align:middle;position:relative;top:-4px"></span></td><td>114</td><td><span style="display:inline-block;width:30px;height:30px;vertical-align:middle;overflow:hidden"><svg width="30" height="30" viewBox="0 0 30 30" style="display:block"><g filter="url(#bl)"><rect x="-2" y="-2" width="34" height="34" fill="#3a2620"/><rect x="0" y="7" width="8" height="16" fill="#4e3323"/><circle cx="8" cy="5" r="2.8" fill="#c09080"/><path d="M13 7Q20 3 31 2.5v3Q22 5.5 13 9.5z" fill="#d39a35"/><rect x="14" y="0" width="14" height="3" fill="#a89088"/><circle cx="19.5" cy="9" r="2.3" fill="#b08282"/><rect x="11" y="15" width="19" height="6" fill="#8a5530"/><rect x="8" y="22" width="8" height="5" fill="#d0d0d0"/><rect x="17" y="23" width="6" height="3.5" fill="#c0c0c0"/><rect x="11" y="15.5" width="5" height="4" fill="#a8a8a8"/><rect x="2" y="22" width="4" height="2" fill="#1e5048"/></g></svg></span></td><td>繁花2003</td><td style="text-align:center"><span class="lbl" style="width:51px;background:#2c3e50">热门新剧</span></td><td>70.00</td><td>40.00</td><td>-</td><td><span class="lbl" style="width:41px;background:#777">未推荐</span></td><td><span class="lbl" style="width:31px;background:#3498db">视频</span></td><td style="color:#18bc9c"><span style="display:inline-block;width:11px;height:11px;border-radius:50%;background:#18bc9c;vertical-align:middle;margin-right:4px;position:relative;top:-1px"></span>正常</td><td style="text-align:center;padding:0;font-size:0"><span class="ab" style="width:25px;background:#f39c12"><span style="position:absolute;left:6px;top:5.5px"><svg width="13" height="10" viewBox="0 0 13 10" style="display:block;"><rect x="0" y="0" width="13" height="10" rx=".8" fill="#fff"/><rect x="1" y="2" width="11" height="7" fill="#f39c12"/><circle cx="3.9" cy="4.3" r="1.2" fill="#fff"/><path d="M2 8.2q0-2.5 1.9-2.5t1.9 2.5z" fill="#fff"/><rect x="6.5" y="3.2" width="4.5" height="1" fill="#fff"/><rect x="6.5" y="5" width="4.5" height="1" fill="#fff"/><rect x="6.5" y="6.8" width="4.5" height="1" fill="#fff"/></svg></span></span><span class="ab" style="width:23px;background:#3498db;margin-left:3.5px"><span style="position:absolute;left:6px;top:5px"><svg width="12" height="11" viewBox="0 0 12 11" style="display:block;"><rect x="0.8" y="0" width="1" height="11" fill="#fff" opacity=".8"/><rect x="3.5" y="1.2" width="8.5" height="2" fill="#fff"/><rect x="3.5" y="4.6" width="8.5" height="2" fill="#fff"/><rect x="3.5" y="8" width="8.5" height="2" fill="#fff"/></svg></span></span><span class="ab" style="width:21px;background:#18bc9c;margin-left:4px"><span style="position:absolute;left:5px;top:5px"><svg width="11" height="11" viewBox="0 0 11 11" style="display:block;"><path d="M8 0.2l2.8 2.8-7 7-2.8-2.8zM0.6 7.9l2.5 2.5-3 .6z" fill="#fff"/></svg></span></span><span class="ab" style="width:21px;background:#e74c3c;margin-left:4px"><span style="position:absolute;left:6px;top:5.5px"><svg width="9" height="10" viewBox="0 0 10 11" style="display:block;"><path d="M3.4 0h3.2l.6 1.3H10v1.2H0V1.3h2.8z" fill="#fff"/><path d="M0.9 3.2h8.2l-.5 7.8H1.4z" fill="#fff"/><rect x="2.8" y="4.3" width=".9" height="5.2" fill="#e74c3c"/><rect x="4.55" y="4.3" width=".9" height="5.2" fill="#e74c3c"/><rect x="6.3" y="4.3" width=".9" height="5.2" fill="#e74c3c"/></svg></span></span></td></tr><tr class="s"><td style="text-align:center;padding:0"><span style="display:inline-block;width:13px;height:13px;border:1px solid #767676;border-radius:2px;background:#fff;vertical-align:middle;position:relative;top:-4px"></span></td><td>113</td><td><span style="display:inline-block;width:30px;height:30px;vertical-align:middle;overflow:hidden"><svg width="30" height="30" viewBox="0 0 30 30" style="display:block"><g filter="url(#bl)"><rect x="-2" y="-2" width="34" height="34" fill="#ebe7e3"/><circle cx="6" cy="9" r="5.2" fill="#3a2820"/><circle cx="7" cy="10.5" r="4" fill="#caa08a"/><circle cx="21.5" cy="7.5" r="4.8" fill="#4a3426"/><circle cx="21.5" cy="9" r="3.8" fill="#d0aa90"/><circle cx="14" cy="12" r="5" fill="#3e2a20"/><circle cx="14" cy="14" r="4.2" fill="#caa08c"/><circle cx="24" cy="17" r="4.8" fill="#3a2a20"/><circle cx="24" cy="19" r="4" fill="#d2a890"/><rect x="9" y="18" width="12" height="6" fill="#e8e4e2"/><rect x="-2" y="13" width="6" height="10" fill="#c89070"/><rect x="-2" y="23" width="34" height="9" fill="#5a3a2c"/><rect x="5" y="24" width="18" height="3" fill="#d8c0b0"/><rect x="-2" y="28" width="34" height="4" fill="#2e1e18"/></g></svg></span></td><td>废柴赘婿是神豪</td><td style="text-align:center"><span class="lbl" style="width:51px;background:#2c3e50">热门新剧</span></td><td>70.00</td><td>40.00</td><td>-</td><td><span class="lbl" style="width:41px;background:#777">未推荐</span></td><td><span class="lbl" style="width:31px;background:#3498db">视频</span></td><td style="color:#18bc9c"><span style="display:inline-block;width:11px;height:11px;border-radius:50%;background:#18bc9c;vertical-align:middle;margin-right:4px;position:relative;top:-1px"></span>正常</td><td style="text-align:center;padding:0;font-size:0"><span class="ab" style="width:25px;background:#f39c12"><span style="position:absolute;left:6px;top:5.5px"><svg width="13" height="10" viewBox="0 0 13 10" style="display:block;"><rect x="0" y="0" width="13" height="10" rx=".8" fill="#fff"/><rect x="1" y="2" width="11" height="7" fill="#f39c12"/><circle cx="3.9" cy="4.3" r="1.2" fill="#fff"/><path d="M2 8.2q0-2.5 1.9-2.5t1.9 2.5z" fill="#fff"/><rect x="6.5" y="3.2" width="4.5" height="1" fill="#fff"/><rect x="6.5" y="5" width="4.5" height="1" fill="#fff"/><rect x="6.5" y="6.8" width="4.5" height="1" fill="#fff"/></svg></span></span><span class="ab" style="width:23px;background:#3498db;margin-left:3.5px"><span style="position:absolute;left:6px;top:5px"><svg width="12" height="11" viewBox="0 0 12 11" style="display:block;"><rect x="0.8" y="0" width="1" height="11" fill="#fff" opacity=".8"/><rect x="3.5" y="1.2" width="8.5" height="2" fill="#fff"/><rect x="3.5" y="4.6" width="8.5" height="2" fill="#fff"/><rect x="3.5" y="8" width="8.5" height="2" fill="#fff"/></svg></span></span><span class="ab" style="width:21px;background:#18bc9c;margin-left:4px"><span style="position:absolute;left:5px;top:5px"><svg width="11" height="11" viewBox="0 0 11 11" style="display:block;"><path d="M8 0.2l2.8 2.8-7 7-2.8-2.8zM0.6 7.9l2.5 2.5-3 .6z" fill="#fff"/></svg></span></span><span class="ab" style="width:21px;background:#e74c3c;margin-left:4px"><span style="position:absolute;left:6px;top:5.5px"><svg width="9" height="10" viewBox="0 0 10 11" style="display:block;"><path d="M3.4 0h3.2l.6 1.3H10v1.2H0V1.3h2.8z" fill="#fff"/><path d="M0.9 3.2h8.2l-.5 7.8H1.4z" fill="#fff"/><rect x="2.8" y="4.3" width=".9" height="5.2" fill="#e74c3c"/><rect x="4.55" y="4.3" width=".9" height="5.2" fill="#e74c3c"/><rect x="6.3" y="4.3" width=".9" height="5.2" fill="#e74c3c"/></svg></span></span></td></tr><tr><td style="text-align:center;padding:0"><span style="display:inline-block;width:13px;height:13px;border:1px solid #767676;border-radius:2px;background:#fff;vertical-align:middle;position:relative;top:-4px"></span></td><td>112</td><td><span style="display:inline-block;width:30px;height:30px;vertical-align:middle;overflow:hidden"><svg width="30" height="30" viewBox="0 0 30 30" style="display:block"><g filter="url(#bl)"><rect x="-2" y="-2" width="34" height="34" fill="#b9a886"/><rect x="-2" y="-2" width="22" height="16" fill="#4f3c28"/><rect x="-2" y="8" width="10" height="4" fill="#a88e6c"/><rect x="-2" y="-2" width="34" height="2.5" fill="#2a2418"/><rect x="17" y="3" width="14" height="7.5" fill="#ede2ca"/><circle cx="17.5" cy="13" r="4.2" fill="#e6dccb"/><ellipse cx="12" cy="22" rx="11" ry="8" fill="#ddd0b8"/><circle cx="17" cy="16.5" r="2.2" fill="#c89a78"/><rect x="22" y="22" width="9" height="9" fill="#7e6c52"/><rect x="24" y="24" width="4" height="3" fill="#9aa070"/></g></svg></span></td><td>重生80年代当食神</td><td style="text-align:center"><span class="lbl" style="width:51px;background:#2c3e50">热门新剧</span></td><td>70.00</td><td>40.00</td><td>-</td><td><span class="lbl" style="width:41px;background:#777">未推荐</span></td><td><span class="lbl" style="width:31px;background:#3498db">视频</span></td><td style="color:#18bc9c"><span style="display:inline-block;width:11px;height:11px;border-radius:50%;background:#18bc9c;vertical-align:middle;margin-right:4px;position:relative;top:-1px"></span>正常</td><td style="text-align:center;padding:0;font-size:0"><span class="ab" style="width:25px;background:#f39c12"><span style="position:absolute;left:6px;top:5.5px"><svg width="13" height="10" viewBox="0 0 13 10" style="display:block;"><rect x="0" y="0" width="13" height="10" rx=".8" fill="#fff"/><rect x="1" y="2" width="11" height="7" fill="#f39c12"/><circle cx="3.9" cy="4.3" r="1.2" fill="#fff"/><path d="M2 8.2q0-2.5 1.9-2.5t1.9 2.5z" fill="#fff"/><rect x="6.5" y="3.2" width="4.5" height="1" fill="#fff"/><rect x="6.5" y="5" width="4.5" height="1" fill="#fff"/><rect x="6.5" y="6.8" width="4.5" height="1" fill="#fff"/></svg></span></span><span class="ab" style="width:23px;background:#3498db;margin-left:3.5px"><span style="position:absolute;left:6px;top:5px"><svg width="12" height="11" viewBox="0 0 12 11" style="display:block;"><rect x="0.8" y="0" width="1" height="11" fill="#fff" opacity=".8"/><rect x="3.5" y="1.2" width="8.5" height="2" fill="#fff"/><rect x="3.5" y="4.6" width="8.5" height="2" fill="#fff"/><rect x="3.5" y="8" width="8.5" height="2" fill="#fff"/></svg></span></span><span class="ab" style="width:21px;background:#18bc9c;margin-left:4px"><span style="position:absolute;left:5px;top:5px"><svg width="11" height="11" viewBox="0 0 11 11" style="display:block;"><path d="M8 0.2l2.8 2.8-7 7-2.8-2.8zM0.6 7.9l2.5 2.5-3 .6z" fill="#fff"/></svg></span></span><span class="ab" style="width:21px;background:#e74c3c;margin-left:4px"><span style="position:absolute;left:6px;top:5.5px"><svg width="9" height="10" viewBox="0 0 10 11" style="display:block;"><path d="M3.4 0h3.2l.6 1.3H10v1.2H0V1.3h2.8z" fill="#fff"/><path d="M0.9 3.2h8.2l-.5 7.8H1.4z" fill="#fff"/><rect x="2.8" y="4.3" width=".9" height="5.2" fill="#e74c3c"/><rect x="4.55" y="4.3" width=".9" height="5.2" fill="#e74c3c"/><rect x="6.3" y="4.3" width=".9" height="5.2" fill="#e74c3c"/></svg></span></span></td></tr><tr class="s"><td style="text-align:center;padding:0"><span style="display:inline-block;width:13px;height:13px;border:1px solid #767676;border-radius:2px;background:#fff;vertical-align:middle;position:relative;top:-4px"></span></td><td>111</td><td><span style="display:inline-block;width:30px;height:30px;vertical-align:middle;overflow:hidden"><svg width="30" height="30" viewBox="0 0 30 30" style="display:block"><g filter="url(#bl)"><rect x="-2" y="-2" width="34" height="34" fill="#4c5659"/><rect x="0" y="-2" width="9" height="4.5" fill="#eef0f0"/><rect x="17.5" y="2" width="6.5" height="3" fill="#e4e8ea"/><rect x="26" y="-2" width="6" height="20" fill="#3c6470"/><rect x="-2" y="19" width="34" height="13" fill="#74787e"/><rect x="1" y="11" width="6.5" height="9" fill="#7a3322"/><rect x="2" y="19" width="5" height="6" fill="#2a2020"/><circle cx="16" cy="10" r="1.5" fill="#d0c0b0"/><rect x="9.5" y="11" width="7.5" height="14" fill="#1c1c22"/><rect x="18" y="9" width="8" height="8" fill="#dcc4c4"/><rect x="17" y="13" width="5.5" height="9" fill="#7a2424"/><rect x="21" y="16" width="4" height="8" fill="#5a3a30"/><ellipse cx="7" cy="27" rx="9" ry="4.5" fill="#283046"/><rect x="-2" y="28" width="10" height="4" fill="#b08070"/></g></svg></span></td><td>精武风云</td><td style="text-align:center"><span class="lbl" style="width:51px;background:#2c3e50">热门新剧</span></td><td>70.00</td><td>40.00</td><td>-</td><td><span class="lbl" style="width:41px;background:#777">未推荐</span></td><td><span class="lbl" style="width:31px;background:#3498db">视频</span></td><td style="color:#18bc9c"><span style="display:inline-block;width:11px;height:11px;border-radius:50%;background:#18bc9c;vertical-align:middle;margin-right:4px;position:relative;top:-1px"></span>正常</td><td style="text-align:center;padding:0;font-size:0"><span class="ab" style="width:25px;background:#f39c12"><span style="position:absolute;left:6px;top:5.5px"><svg width="13" height="10" viewBox="0 0 13 10" style="display:block;"><rect x="0" y="0" width="13" height="10" rx=".8" fill="#fff"/><rect x="1" y="2" width="11" height="7" fill="#f39c12"/><circle cx="3.9" cy="4.3" r="1.2" fill="#fff"/><path d="M2 8.2q0-2.5 1.9-2.5t1.9 2.5z" fill="#fff"/><rect x="6.5" y="3.2" width="4.5" height="1" fill="#fff"/><rect x="6.5" y="5" width="4.5" height="1" fill="#fff"/><rect x="6.5" y="6.8" width="4.5" height="1" fill="#fff"/></svg></span></span><span class="ab" style="width:23px;background:#3498db;margin-left:3.5px"><span style="position:absolute;left:6px;top:5px"><svg width="12" height="11" viewBox="0 0 12 11" style="display:block;"><rect x="0.8" y="0" width="1" height="11" fill="#fff" opacity=".8"/><rect x="3.5" y="1.2" width="8.5" height="2" fill="#fff"/><rect x="3.5" y="4.6" width="8.5" height="2" fill="#fff"/><rect x="3.5" y="8" width="8.5" height="2" fill="#fff"/></svg></span></span><span class="ab" style="width:21px;background:#18bc9c;margin-left:4px"><span style="position:absolute;left:5px;top:5px"><svg width="11" height="11" viewBox="0 0 11 11" style="display:block;"><path d="M8 0.2l2.8 2.8-7 7-2.8-2.8zM0.6 7.9l2.5 2.5-3 .6z" fill="#fff"/></svg></span></span><span class="ab" style="width:21px;background:#e74c3c;margin-left:4px"><span style="position:absolute;left:6px;top:5.5px"><svg width="9" height="10" viewBox="0 0 10 11" style="display:block;"><path d="M3.4 0h3.2l.6 1.3H10v1.2H0V1.3h2.8z" fill="#fff"/><path d="M0.9 3.2h8.2l-.5 7.8H1.4z" fill="#fff"/><rect x="2.8" y="4.3" width=".9" height="5.2" fill="#e74c3c"/><rect x="4.55" y="4.3" width=".9" height="5.2" fill="#e74c3c"/><rect x="6.3" y="4.3" width=".9" height="5.2" fill="#e74c3c"/></svg></span></span></td></tr><tr><td style="text-align:center;padding:0"><span style="display:inline-block;width:13px;height:13px;border:1px solid #767676;border-radius:2px;background:#fff;vertical-align:middle;position:relative;top:-4px"></span></td><td>110</td><td><span style="display:inline-block;width:30px;height:30px;vertical-align:middle;overflow:hidden"><svg width="30" height="30" viewBox="0 0 30 30" style="display:block"><g filter="url(#bl)"><rect x="-2" y="-2" width="34" height="34" fill="#9c949a"/><rect x="-2" y="-2" width="34" height="10" fill="#283038"/><rect x="-2" y="1.5" width="34" height="2" fill="#687078"/><rect x="-2" y="8" width="34" height="12" fill="#c4c0c6"/><rect x="3" y="10.5" width="24" height="1.5" fill="#d89898"/><path d="M11.5 12h5l1 18.5h-8z" fill="#e02232"/><rect x="2" y="19" width="5" height="4" fill="#2a5a68"/><rect x="4" y="24" width="4" height="4" fill="#2a5a6a"/><rect x="20" y="19" width="4" height="3" fill="#3a4060"/><rect x="21" y="24" width="3" height="5" fill="#3a4058"/><rect x="8" y="21" width="8" height="2" fill="#303030"/><rect x="-2" y="28" width="6" height="4" fill="#1a3a48"/></g></svg></span></td><td>新九五至尊</td><td style="text-align:center"><span class="lbl" style="width:51px;background:#2c3e50">热门新剧</span></td><td>70.00</td><td>40.00</td><td>-</td><td><span class="lbl" style="width:41px;background:#777">未推荐</span></td><td><span class="lbl" style="width:31px;background:#3498db">视频</span></td><td style="color:#18bc9c"><span style="display:inline-block;width:11px;height:11px;border-radius:50%;background:#18bc9c;vertical-align:middle;margin-right:4px;position:relative;top:-1px"></span>正常</td><td style="text-align:center;padding:0;font-size:0"><span class="ab" style="width:25px;background:#f39c12"><span style="position:absolute;left:6px;top:5.5px"><svg width="13" height="10" viewBox="0 0 13 10" style="display:block;"><rect x="0" y="0" width="13" height="10" rx=".8" fill="#fff"/><rect x="1" y="2" width="11" height="7" fill="#f39c12"/><circle cx="3.9" cy="4.3" r="1.2" fill="#fff"/><path d="M2 8.2q0-2.5 1.9-2.5t1.9 2.5z" fill="#fff"/><rect x="6.5" y="3.2" width="4.5" height="1" fill="#fff"/><rect x="6.5" y="5" width="4.5" height="1" fill="#fff"/><rect x="6.5" y="6.8" width="4.5" height="1" fill="#fff"/></svg></span></span><span class="ab" style="width:23px;background:#3498db;margin-left:3.5px"><span style="position:absolute;left:6px;top:5px"><svg width="12" height="11" viewBox="0 0 12 11" style="display:block;"><rect x="0.8" y="0" width="1" height="11" fill="#fff" opacity=".8"/><rect x="3.5" y="1.2" width="8.5" height="2" fill="#fff"/><rect x="3.5" y="4.6" width="8.5" height="2" fill="#fff"/><rect x="3.5" y="8" width="8.5" height="2" fill="#fff"/></svg></span></span><span class="ab" style="width:21px;background:#18bc9c;margin-left:4px"><span style="position:absolute;left:5px;top:5px"><svg width="11" height="11" viewBox="0 0 11 11" style="display:block;"><path d="M8 0.2l2.8 2.8-7 7-2.8-2.8zM0.6 7.9l2.5 2.5-3 .6z" fill="#fff"/></svg></span></span><span class="ab" style="width:21px;background:#e74c3c;margin-left:4px"><span style="position:absolute;left:6px;top:5.5px"><svg width="9" height="10" viewBox="0 0 10 11" style="display:block;"><path d="M3.4 0h3.2l.6 1.3H10v1.2H0V1.3h2.8z" fill="#fff"/><path d="M0.9 3.2h8.2l-.5 7.8H1.4z" fill="#fff"/><rect x="2.8" y="4.3" width=".9" height="5.2" fill="#e74c3c"/><rect x="4.55" y="4.3" width=".9" height="5.2" fill="#e74c3c"/><rect x="6.3" y="4.3" width=".9" height="5.2" fill="#e74c3c"/></svg></span></span></td></tr><tr class="s"><td style="text-align:center;padding:0"><span style="display:inline-block;width:13px;height:13px;border:1px solid #767676;border-radius:2px;background:#fff;vertical-align:middle;position:relative;top:-4px"></span></td><td>109</td><td><span style="display:inline-block;width:30px;height:30px;vertical-align:middle;overflow:hidden"><svg width="30" height="30" viewBox="0 0 30 30" style="display:block"><g filter="url(#bl)"><rect x="-2" y="-2" width="34" height="34" fill="#cbc8c0"/><rect x="17" y="-2" width="15" height="34" fill="#dedcd8"/><path d="M8 7L31 1v2L9 9z" fill="#8a5a5a"/><rect x="12" y="-2" width="20" height="6" fill="#b0b0b0"/><rect x="22" y="11" width="9" height="4" fill="#b4ab94"/><ellipse cx="18" cy="9" rx="6.5" ry="2.8" fill="#222"/><ellipse cx="19" cy="14" rx="5" ry="5" fill="#d6bfb0"/><path d="M-2 20L8 17.5 15 19 15 32H-2z" fill="#2e3236"/><path d="M12 20L19 20 20 32 13 32z" fill="#e2e2e4"/><path d="M18 20L21 23 23 32 19 32z" fill="#3a3a3a"/><circle cx="27" cy="27" r="4.5" fill="#b83232"/></g></svg></span></td><td>倚天</td><td style="text-align:center"><span class="lbl" style="width:51px;background:#2c3e50">热门新剧</span></td><td>70.00</td><td>40.00</td><td>-</td><td><span class="lbl" style="width:41px;background:#777">未推荐</span></td><td><span class="lbl" style="width:31px;background:#3498db">视频</span></td><td style="color:#18bc9c"><span style="display:inline-block;width:11px;height:11px;border-radius:50%;background:#18bc9c;vertical-align:middle;margin-right:4px;position:relative;top:-1px"></span>正常</td><td style="text-align:center;padding:0;font-size:0"><span class="ab" style="width:25px;background:#f39c12"><span style="position:absolute;left:6px;top:5.5px"><svg width="13" height="10" viewBox="0 0 13 10" style="display:block;"><rect x="0" y="0" width="13" height="10" rx=".8" fill="#fff"/><rect x="1" y="2" width="11" height="7" fill="#f39c12"/><circle cx="3.9" cy="4.3" r="1.2" fill="#fff"/><path d="M2 8.2q0-2.5 1.9-2.5t1.9 2.5z" fill="#fff"/><rect x="6.5" y="3.2" width="4.5" height="1" fill="#fff"/><rect x="6.5" y="5" width="4.5" height="1" fill="#fff"/><rect x="6.5" y="6.8" width="4.5" height="1" fill="#fff"/></svg></span></span><span class="ab" style="width:23px;background:#3498db;margin-left:3.5px"><span style="position:absolute;left:6px;top:5px"><svg width="12" height="11" viewBox="0 0 12 11" style="display:block;"><rect x="0.8" y="0" width="1" height="11" fill="#fff" opacity=".8"/><rect x="3.5" y="1.2" width="8.5" height="2" fill="#fff"/><rect x="3.5" y="4.6" width="8.5" height="2" fill="#fff"/><rect x="3.5" y="8" width="8.5" height="2" fill="#fff"/></svg></span></span><span class="ab" style="width:21px;background:#18bc9c;margin-left:4px"><span style="position:absolute;left:5px;top:5px"><svg width="11" height="11" viewBox="0 0 11 11" style="display:block;"><path d="M8 0.2l2.8 2.8-7 7-2.8-2.8zM0.6 7.9l2.5 2.5-3 .6z" fill="#fff"/></svg></span></span><span class="ab" style="width:21px;background:#e74c3c;margin-left:4px"><span style="position:absolute;left:6px;top:5.5px"><svg width="9" height="10" viewBox="0 0 10 11" style="display:block;"><path d="M3.4 0h3.2l.6 1.3H10v1.2H0V1.3h2.8z" fill="#fff"/><path d="M0.9 3.2h8.2l-.5 7.8H1.4z" fill="#fff"/><rect x="2.8" y="4.3" width=".9" height="5.2" fill="#e74c3c"/><rect x="4.55" y="4.3" width=".9" height="5.2" fill="#e74c3c"/><rect x="6.3" y="4.3" width=".9" height="5.2" fill="#e74c3c"/></svg></span></span></td></tr><tr><td style="text-align:center;padding:0"><span style="display:inline-block;width:13px;height:13px;border:1px solid #767676;border-radius:2px;background:#fff;vertical-align:middle;position:relative;top:-4px"></span></td><td>108</td><td><span style="display:inline-block;width:30px;height:30px;vertical-align:middle;overflow:hidden"><svg width="30" height="30" viewBox="0 0 30 30" style="display:block"><g filter="url(#bl)"><rect x="-2" y="-2" width="34" height="34" fill="#d8dccf"/><rect x="-2" y="-2" width="34" height="6" fill="#d6d0c0"/><rect x="7" y="-2" width="2.5" height="6" fill="#6a4848"/><rect x="18" y="-2" width="3" height="6" fill="#7a4444"/><rect x="24" y="0" width="7" height="12" fill="#c8ccd0"/><ellipse cx="13" cy="7" rx="7" ry="3.6" fill="#3a6a40"/><rect x="0" y="4" width="5" height="4" fill="#8a86b0"/><path d="M-2 9L10 14.5 10 16.5-2 13z" fill="#1e1e22"/><ellipse cx="21.5" cy="20" rx="9" ry="10" fill="#d6cab6"/><ellipse cx="21" cy="8" rx="4.2" ry="2.6" fill="#2a2a30"/><circle cx="19.5" cy="12" r="3" fill="#c8a890"/><rect x="17" y="14" width="5" height="10" fill="#c9a232"/><rect x="19" y="17" width="2" height="5" fill="#5a6a8a"/><rect x="9" y="18" width="5" height="2" fill="#9a5a50"/><rect x="-2" y="27" width="9" height="5" fill="#6a3a30"/></g></svg></span></td><td>园区风云</td><td style="text-align:center"><span class="lbl" style="width:51px;background:#2c3e50">热门新剧</span></td><td>70.00</td><td>40.00</td><td>-</td><td><span class="lbl" style="width:41px;background:#777">未推荐</span></td><td><span class="lbl" style="width:31px;background:#3498db">视频</span></td><td style="color:#18bc9c"><span style="display:inline-block;width:11px;height:11px;border-radius:50%;background:#18bc9c;vertical-align:middle;margin-right:4px;position:relative;top:-1px"></span>正常</td><td style="text-align:center;padding:0;font-size:0"><span class="ab" style="width:25px;background:#f39c12"><span style="position:absolute;left:6px;top:5.5px"><svg width="13" height="10" viewBox="0 0 13 10" style="display:block;"><rect x="0" y="0" width="13" height="10" rx=".8" fill="#fff"/><rect x="1" y="2" width="11" height="7" fill="#f39c12"/><circle cx="3.9" cy="4.3" r="1.2" fill="#fff"/><path d="M2 8.2q0-2.5 1.9-2.5t1.9 2.5z" fill="#fff"/><rect x="6.5" y="3.2" width="4.5" height="1" fill="#fff"/><rect x="6.5" y="5" width="4.5" height="1" fill="#fff"/><rect x="6.5" y="6.8" width="4.5" height="1" fill="#fff"/></svg></span></span><span class="ab" style="width:23px;background:#3498db;margin-left:3.5px"><span style="position:absolute;left:6px;top:5px"><svg width="12" height="11" viewBox="0 0 12 11" style="display:block;"><rect x="0.8" y="0" width="1" height="11" fill="#fff" opacity=".8"/><rect x="3.5" y="1.2" width="8.5" height="2" fill="#fff"/><rect x="3.5" y="4.6" width="8.5" height="2" fill="#fff"/><rect x="3.5" y="8" width="8.5" height="2" fill="#fff"/></svg></span></span><span class="ab" style="width:21px;background:#18bc9c;margin-left:4px"><span style="position:absolute;left:5px;top:5px"><svg width="11" height="11" viewBox="0 0 11 11" style="display:block;"><path d="M8 0.2l2.8 2.8-7 7-2.8-2.8zM0.6 7.9l2.5 2.5-3 .6z" fill="#fff"/></svg></span></span><span class="ab" style="width:21px;background:#e74c3c;margin-left:4px"><span style="position:absolute;left:6px;top:5.5px"><svg width="9" height="10" viewBox="0 0 10 11" style="display:block;"><path d="M3.4 0h3.2l.6 1.3H10v1.2H0V1.3h2.8z" fill="#fff"/><path d="M0.9 3.2h8.2l-.5 7.8H1.4z" fill="#fff"/><rect x="2.8" y="4.3" width=".9" height="5.2" fill="#e74c3c"/><rect x="4.55" y="4.3" width=".9" height="5.2" fill="#e74c3c"/><rect x="6.3" y="4.3" width=".9" height="5.2" fill="#e74c3c"/></svg></span></span></td></tr><tr class="s"><td style="text-align:center;padding:0"><span style="display:inline-block;width:13px;height:13px;border:1px solid #767676;border-radius:2px;background:#fff;vertical-align:middle;position:relative;top:-4px"></span></td><td>107</td><td><span style="display:inline-block;width:30px;height:30px;vertical-align:middle;overflow:hidden"><svg width="30" height="30" viewBox="0 0 30 30" style="display:block"><g filter="url(#bl)"><rect x="-2" y="-2" width="34" height="34" fill="#ece3c6"/><ellipse cx="25" cy="12" rx="7" ry="8" fill="#e2c35a"/><rect x="-2" y="13" width="10" height="5" fill="#e0c45a"/><rect x="27" y="2" width="4" height="14" fill="#7a5a40"/><ellipse cx="15" cy="9" rx="5" ry="3" fill="#2a2a2a"/><ellipse cx="16" cy="13" rx="4" ry="4.5" fill="#c8a888"/><rect x="-2" y="15.5" width="34" height="17" fill="#4a4440"/><rect x="12" y="16" width="5" height="8" fill="#3a4a78"/><rect x="-2" y="26" width="34" height="6" fill="#2c2622"/><rect x="5" y="23" width="18" height="1" fill="#c0b8b0"/></g></svg></span></td><td>首富回村</td><td style="text-align:center"><span class="lbl" style="width:51px;background:#2c3e50">热门新剧</span></td><td>70.00</td><td>40.00</td><td>-</td><td><span class="lbl" style="width:41px;background:#777">未推荐</span></td><td><span class="lbl" style="width:31px;background:#3498db">视频</span></td><td style="color:#18bc9c"><span style="display:inline-block;width:11px;height:11px;border-radius:50%;background:#18bc9c;vertical-align:middle;margin-right:4px;position:relative;top:-1px"></span>正常</td><td style="text-align:center;padding:0;font-size:0"><span class="ab" style="width:25px;background:#f39c12"><span style="position:absolute;left:6px;top:5.5px"><svg width="13" height="10" viewBox="0 0 13 10" style="display:block;"><rect x="0" y="0" width="13" height="10" rx=".8" fill="#fff"/><rect x="1" y="2" width="11" height="7" fill="#f39c12"/><circle cx="3.9" cy="4.3" r="1.2" fill="#fff"/><path d="M2 8.2q0-2.5 1.9-2.5t1.9 2.5z" fill="#fff"/><rect x="6.5" y="3.2" width="4.5" height="1" fill="#fff"/><rect x="6.5" y="5" width="4.5" height="1" fill="#fff"/><rect x="6.5" y="6.8" width="4.5" height="1" fill="#fff"/></svg></span></span><span class="ab" style="width:23px;background:#3498db;margin-left:3.5px"><span style="position:absolute;left:6px;top:5px"><svg width="12" height="11" viewBox="0 0 12 11" style="display:block;"><rect x="0.8" y="0" width="1" height="11" fill="#fff" opacity=".8"/><rect x="3.5" y="1.2" width="8.5" height="2" fill="#fff"/><rect x="3.5" y="4.6" width="8.5" height="2" fill="#fff"/><rect x="3.5" y="8" width="8.5" height="2" fill="#fff"/></svg></span></span><span class="ab" style="width:21px;background:#18bc9c;margin-left:4px"><span style="position:absolute;left:5px;top:5px"><svg width="11" height="11" viewBox="0 0 11 11" style="display:block;"><path d="M8 0.2l2.8 2.8-7 7-2.8-2.8zM0.6 7.9l2.5 2.5-3 .6z" fill="#fff"/></svg></span></span><span class="ab" style="width:21px;background:#e74c3c;margin-left:4px"><span style="position:absolute;left:6px;top:5.5px"><svg width="9" height="10" viewBox="0 0 10 11" style="display:block;"><path d="M3.4 0h3.2l.6 1.3H10v1.2H0V1.3h2.8z" fill="#fff"/><path d="M0.9 3.2h8.2l-.5 7.8H1.4z" fill="#fff"/><rect x="2.8" y="4.3" width=".9" height="5.2" fill="#e74c3c"/><rect x="4.55" y="4.3" width=".9" height="5.2" fill="#e74c3c"/><rect x="6.3" y="4.3" width=".9" height="5.2" fill="#e74c3c"/></svg></span></span></td></tr><tr><td style="text-align:center;padding:0"><span style="display:inline-block;width:13px;height:13px;border:1px solid #767676;border-radius:2px;background:#fff;vertical-align:middle;position:relative;top:-4px"></span></td><td>106</td><td><span style="display:inline-block;width:30px;height:30px;vertical-align:middle;overflow:hidden"><svg width="30" height="30" viewBox="0 0 30 30" style="display:block"><g filter="url(#bl)"><rect x="-2" y="-2" width="34" height="34" fill="#3a4a8a"/><rect x="-2" y="-2" width="34" height="5" fill="#1a2250"/><rect x="-2" y="4" width="28" height="10" fill="#2ba2d2"/><rect x="3" y="5" width="8" height="3" fill="#d0d8e8"/><ellipse cx="22" cy="6" rx="5" ry="3" fill="#222840"/><circle cx="21" cy="10" r="3.6" fill="#b06088"/><ellipse cx="8" cy="12" rx="5" ry="3.5" fill="#22283a"/><circle cx="9" cy="15" r="3.5" fill="#b45c84"/><rect x="16" y="14" width="14" height="7" fill="#3a4684"/><rect x="20" y="14" width="4" height="4" fill="#b090d0"/><rect x="-2" y="18" width="16" height="6" fill="#9a70a8"/><rect x="-2" y="22" width="34" height="10" fill="#c8b4d2"/><rect x="10" y="23" width="12" height="4" fill="#9a6a90"/><rect x="22" y="20" width="9" height="6" fill="#e6e2ec"/><rect x="-2" y="28" width="34" height="4" fill="#e0d4e4"/></g></svg></span></td><td>穿越诡计爱上你</td><td style="text-align:center"><span class="lbl" style="width:51px;background:#2c3e50">热门新剧</span></td><td>70.00</td><td>40.00</td><td>-</td><td><span class="lbl" style="width:41px;background:#777">未推荐</span></td><td><span class="lbl" style="width:31px;background:#3498db">视频</span></td><td style="color:#18bc9c"><span style="display:inline-block;width:11px;height:11px;border-radius:50%;background:#18bc9c;vertical-align:middle;margin-right:4px;position:relative;top:-1px"></span>正常</td><td style="text-align:center;padding:0;font-size:0"><span class="ab" style="width:25px;background:#f39c12"><span style="position:absolute;left:6px;top:5.5px"><svg width="13" height="10" viewBox="0 0 13 10" style="display:block;"><rect x="0" y="0" width="13" height="10" rx=".8" fill="#fff"/><rect x="1" y="2" width="11" height="7" fill="#f39c12"/><circle cx="3.9" cy="4.3" r="1.2" fill="#fff"/><path d="M2 8.2q0-2.5 1.9-2.5t1.9 2.5z" fill="#fff"/><rect x="6.5" y="3.2" width="4.5" height="1" fill="#fff"/><rect x="6.5" y="5" width="4.5" height="1" fill="#fff"/><rect x="6.5" y="6.8" width="4.5" height="1" fill="#fff"/></svg></span></span><span class="ab" style="width:23px;background:#3498db;margin-left:3.5px"><span style="position:absolute;left:6px;top:5px"><svg width="12" height="11" viewBox="0 0 12 11" style="display:block;"><rect x="0.8" y="0" width="1" height="11" fill="#fff" opacity=".8"/><rect x="3.5" y="1.2" width="8.5" height="2" fill="#fff"/><rect x="3.5" y="4.6" width="8.5" height="2" fill="#fff"/><rect x="3.5" y="8" width="8.5" height="2" fill="#fff"/></svg></span></span><span class="ab" style="width:21px;background:#18bc9c;margin-left:4px"><span style="position:absolute;left:5px;top:5px"><svg width="11" height="11" viewBox="0 0 11 11" style="display:block;"><path d="M8 0.2l2.8 2.8-7 7-2.8-2.8zM0.6 7.9l2.5 2.5-3 .6z" fill="#fff"/></svg></span></span><span class="ab" style="width:21px;background:#e74c3c;margin-left:4px"><span style="position:absolute;left:6px;top:5.5px"><svg width="9" height="10" viewBox="0 0 10 11" style="display:block;"><path d="M3.4 0h3.2l.6 1.3H10v1.2H0V1.3h2.8z" fill="#fff"/><path d="M0.9 3.2h8.2l-.5 7.8H1.4z" fill="#fff"/><rect x="2.8" y="4.3" width=".9" height="5.2" fill="#e74c3c"/><rect x="4.55" y="4.3" width=".9" height="5.2" fill="#e74c3c"/><rect x="6.3" y="4.3" width=".9" height="5.2" fill="#e74c3c"/></svg></span></span></td></tr></table>
<div class="t" style="left:260px;top:748px;color:#333">显示第 1 到第 10 条记录，总共 37 条记录 每页显示</div>
<div class="abs" style="left:560px;top:744px;width:51px;height:31px;border:1px solid #ddd;background:#f4f4f4;border-radius:3px"></div>
<div class="t" style="left:573.5px;top:748px;color:#333">10</div>
<div class="ic" style="left:589px;top:757px"><svg width="8" height="4" viewBox="0 0 8 4" style="display:block;"><path d="M0 4L4 0 8 4z" fill="#333"/></svg></div>
<div class="t" style="left:615px;top:748px;color:#333">条记录</div>
<div class="pg" style="left:1522px;width:65px;border-radius:3px 0 0 3px;">上一页</div>
<div class="pg" style="left:1586px;width:34px;background:#2c3e50;border-color:#2c3e50;color:#fff;">1</div>
<div class="pg" style="left:1619px;width:33px;">2</div>
<div class="pg" style="left:1651px;width:33px;">3</div>
<div class="pg" style="left:1683px;width:33px;">4</div>
<div class="pg" style="left:1715px;width:66px;border-radius:0 3px 3px 0;">下一页</div>
<div class="abs" style="left:1785px;top:742px;width:50px;height:31px;border:1px solid #d2d6de;background:#fff"></div>
<div class="abs" style="left:1840px;top:743px;width:50px;height:31px;border:1px solid #ddd;background:#f4f4f4;border-radius:3px;text-align:center;line-height:29px;color:#333">跳转</div>
<div class="abs" style="left:1916.5px;top:190px;width:12px;height:101px;background:#3b82f6;border-radius:6px 0 0 6px"></div>
<div class="abs" style="left:1918.5px;top:191px;width:9px;height:24px;background:#fff;border-radius:5px 0 0 5px"></div>
</body></html>
